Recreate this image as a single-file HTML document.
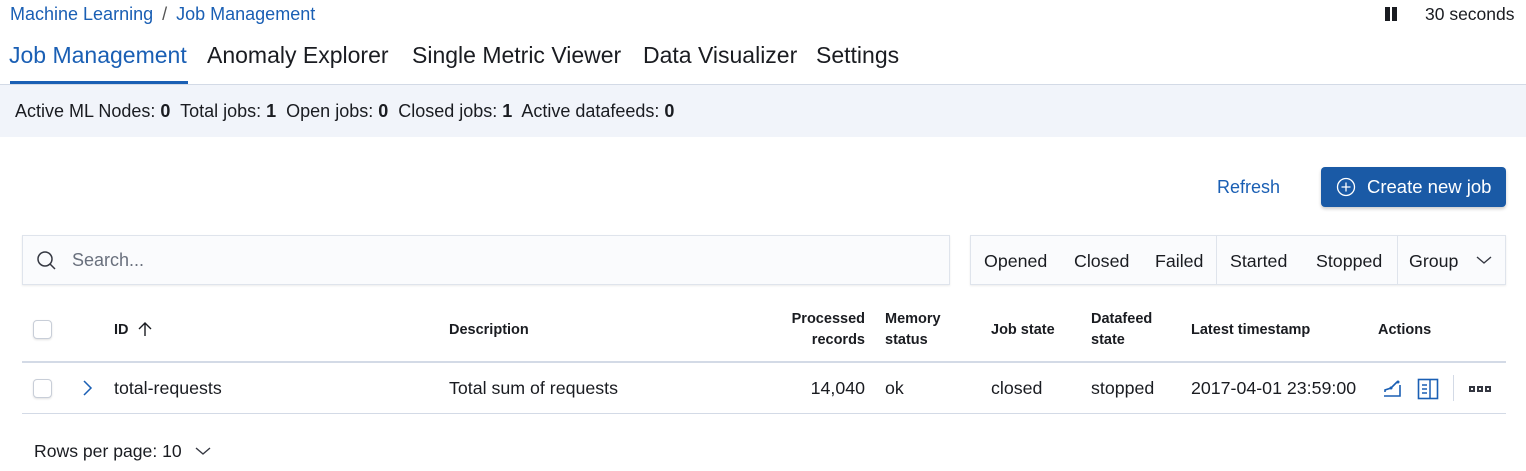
<!DOCTYPE html>
<html><head><meta charset="utf-8"><style>
*{margin:0;padding:0;box-sizing:border-box}
body{width:1526px;height:471px;background:#fff;font-family:"Liberation Sans",sans-serif;color:#1a1c21;position:relative;overflow:hidden}
.a{position:absolute;white-space:nowrap}
.t{font-size:23px;top:42px;color:#1a1c21}
.blue{color:#1a5fb4}
.h{font-size:14.5px;font-weight:bold;line-height:21px}
.c{font-size:17.8px}
.cb{position:absolute;width:19px;height:19px;border:1px solid #c8ced8;border-radius:4px;background:#fff;box-shadow:0 1px 2px rgba(0,0,0,.12)}
</style></head><body>
<div class="a blue" style="left:10px;top:4px;font-size:18px">Machine Learning <span style="color:#555;margin:0 4px">/</span> Job Management</div>
<div class="a" style="left:1385px;top:7px;width:5px;height:14px;background:#1a1c21"></div>
<div class="a" style="left:1392px;top:7px;width:5px;height:14px;background:#1a1c21"></div>
<div class="a" style="left:1425px;top:4px;font-size:17.5px">30 seconds</div>

<div class="a t" style="left:9px;color:#1a5fb4">Job Management</div>
<div class="a t" style="left:207px">Anomaly Explorer</div>
<div class="a t" style="left:412px">Single Metric Viewer</div>
<div class="a t" style="left:643px">Data Visualizer</div>
<div class="a t" style="left:816px">Settings</div>
<div class="a" style="left:10px;top:81px;width:178px;height:3px;background:#1a5fb4"></div>
<div class="a" style="left:0;top:84px;width:1526px;height:53px;background:#f1f4fa;border-top:1px solid #d3dae6"></div>
<div class="a" style="left:15px;top:101px;font-size:18px">Active ML Nodes: <b>0</b>&nbsp; Total jobs: <b>1</b>&nbsp; Open jobs: <b>0</b>&nbsp; Closed jobs: <b>1</b>&nbsp; Active datafeeds: <b>0</b></div>

<div class="a blue" style="left:1217px;top:177px;font-size:18px">Refresh</div>
<div class="a" style="left:1321px;top:167px;width:185px;height:40px;background:#1a5aa6;border-radius:4px;box-shadow:0 2px 3px rgba(0,0,0,.2)"></div>
<svg class="a" style="left:1336px;top:177px" width="20" height="20" viewBox="0 0 20 20"><circle cx="10" cy="10" r="8.5" fill="none" stroke="#fff" stroke-width="1.3"/><path d="M10 5.5v9M5.5 10h9" stroke="#fff" stroke-width="1.3"/></svg>
<div class="a" style="left:1367px;top:176px;font-size:18.5px;color:#fff">Create new job</div>

<div class="a" style="left:22px;top:235px;width:928px;height:50px;background:#fafbfd;border:1px solid #dfe4ec;box-shadow:0 1px 2px rgba(0,0,0,.08)"></div>
<svg class="a" style="left:36px;top:250px" width="22" height="22" viewBox="0 0 22 22"><circle cx="9" cy="9" r="7" fill="none" stroke="#343741" stroke-width="1.5"/><path d="M14 14l5 5" stroke="#343741" stroke-width="1.5"/></svg>
<div class="a" style="left:72px;top:250px;font-size:18px;color:#69707d">Search...</div>

<div class="a" style="left:970px;top:235px;width:536px;height:50px;background:#fafbfd;border:1px solid #dfe4ec;box-shadow:0 1px 2px rgba(0,0,0,.08)"></div>
<div class="a" style="left:1216px;top:236px;width:1px;height:48px;background:#dfe4ec"></div>
<div class="a" style="left:1397px;top:236px;width:1px;height:48px;background:#dfe4ec"></div>
<div class="a c" style="left:984px;top:251px">Opened</div>
<div class="a c" style="left:1074px;top:251px">Closed</div>
<div class="a c" style="left:1155px;top:251px">Failed</div>
<div class="a c" style="left:1230px;top:251px">Started</div>
<div class="a c" style="left:1316px;top:251px">Stopped</div>
<div class="a c" style="left:1409px;top:251px">Group</div>
<svg class="a" style="left:1476px;top:254px" width="16" height="12" viewBox="0 0 16 12"><path d="M1 3l7 6 7-6" fill="none" stroke="#343741" stroke-width="1.4"/></svg>

<div class="cb" style="left:33px;top:320px"></div>
<div class="a h" style="left:114px;top:320px">ID</div>
<svg class="a" style="left:137px;top:321px" width="16" height="16" viewBox="0 0 16 16"><path d="M8 15V2M2 8l6-6 6 6" fill="none" stroke="#1a1c21" stroke-width="1.4"/></svg>
<div class="a h" style="left:449px;top:320px">Description</div>
<div class="a h" style="left:780px;top:309px;width:85px;text-align:right">Processed<br>records</div>
<div class="a h" style="left:885px;top:309px">Memory<br>status</div>
<div class="a h" style="left:991px;top:320px">Job state</div>
<div class="a h" style="left:1091px;top:309px">Datafeed<br>state</div>
<div class="a h" style="left:1191px;top:320px">Latest timestamp</div>
<div class="a h" style="left:1378px;top:320px">Actions</div>
<div class="a" style="left:22px;top:361px;width:1484px;height:2px;background:#d3dae6"></div>

<div class="cb" style="left:33px;top:379px"></div>
<svg class="a" style="left:80px;top:379px" width="14" height="18" viewBox="0 0 14 18"><path d="M4 2l7 7-7 7" fill="none" stroke="#1a5fb4" stroke-width="1.5"/></svg>
<div class="a c" style="left:114px;top:378px">total-requests</div>
<div class="a c" style="left:449px;top:378px">Total sum of requests</div>
<div class="a c" style="left:770px;top:378px;width:95px;text-align:right">14,040</div>
<div class="a c" style="left:885px;top:378px">ok</div>
<div class="a c" style="left:991px;top:378px">closed</div>
<div class="a c" style="left:1091px;top:378px">stopped</div>
<div class="a c" style="left:1191px;top:378px">2017-04-01 23:59:00</div>
<svg class="a" style="left:1383px;top:379px" width="20" height="20" viewBox="0 0 20 20"><path d="M1 17h16V6M2 13V11l6-2 6-6" fill="none" stroke="#1a5fb4" stroke-width="1.6"/><circle cx="8" cy="9" r="1.5" fill="#1a5fb4"/><circle cx="15" cy="3" r="1.5" fill="#1a5fb4"/></svg>
<svg class="a" style="left:1417px;top:378px" width="22" height="22" viewBox="0 0 22 22"><rect x="1.5" y="1.5" width="19" height="19" fill="none" stroke="#1a5fb4" stroke-width="1.6"/><path d="M13 2v18M5 7h5M5 11h5M5 15h5" stroke="#1a5fb4" stroke-width="1.5"/></svg>
<div class="a" style="left:1453px;top:375px;width:1px;height:26px;background:#d3dae6"></div>
<div class="a" style="left:1469px;top:386px;width:22px;height:6px;background:repeating-linear-gradient(90deg,#343741 0 6px,transparent 6px 8px)"></div>
<div class="a" style="left:1471px;top:388px;width:2px;height:2px;background:#fff"></div>
<div class="a" style="left:1479px;top:388px;width:2px;height:2px;background:#fff"></div>
<div class="a" style="left:1487px;top:388px;width:2px;height:2px;background:#fff"></div>
<div class="a" style="left:22px;top:413px;width:1484px;height:1px;background:#d3dae6"></div>

<div class="a" style="left:34px;top:441px;font-size:17.6px">Rows per page: 10</div>
<svg class="a" style="left:195px;top:445px" width="16" height="12" viewBox="0 0 16 12"><path d="M1 3l7 6 7-6" fill="none" stroke="#343741" stroke-width="1.4"/></svg>
</body></html>
